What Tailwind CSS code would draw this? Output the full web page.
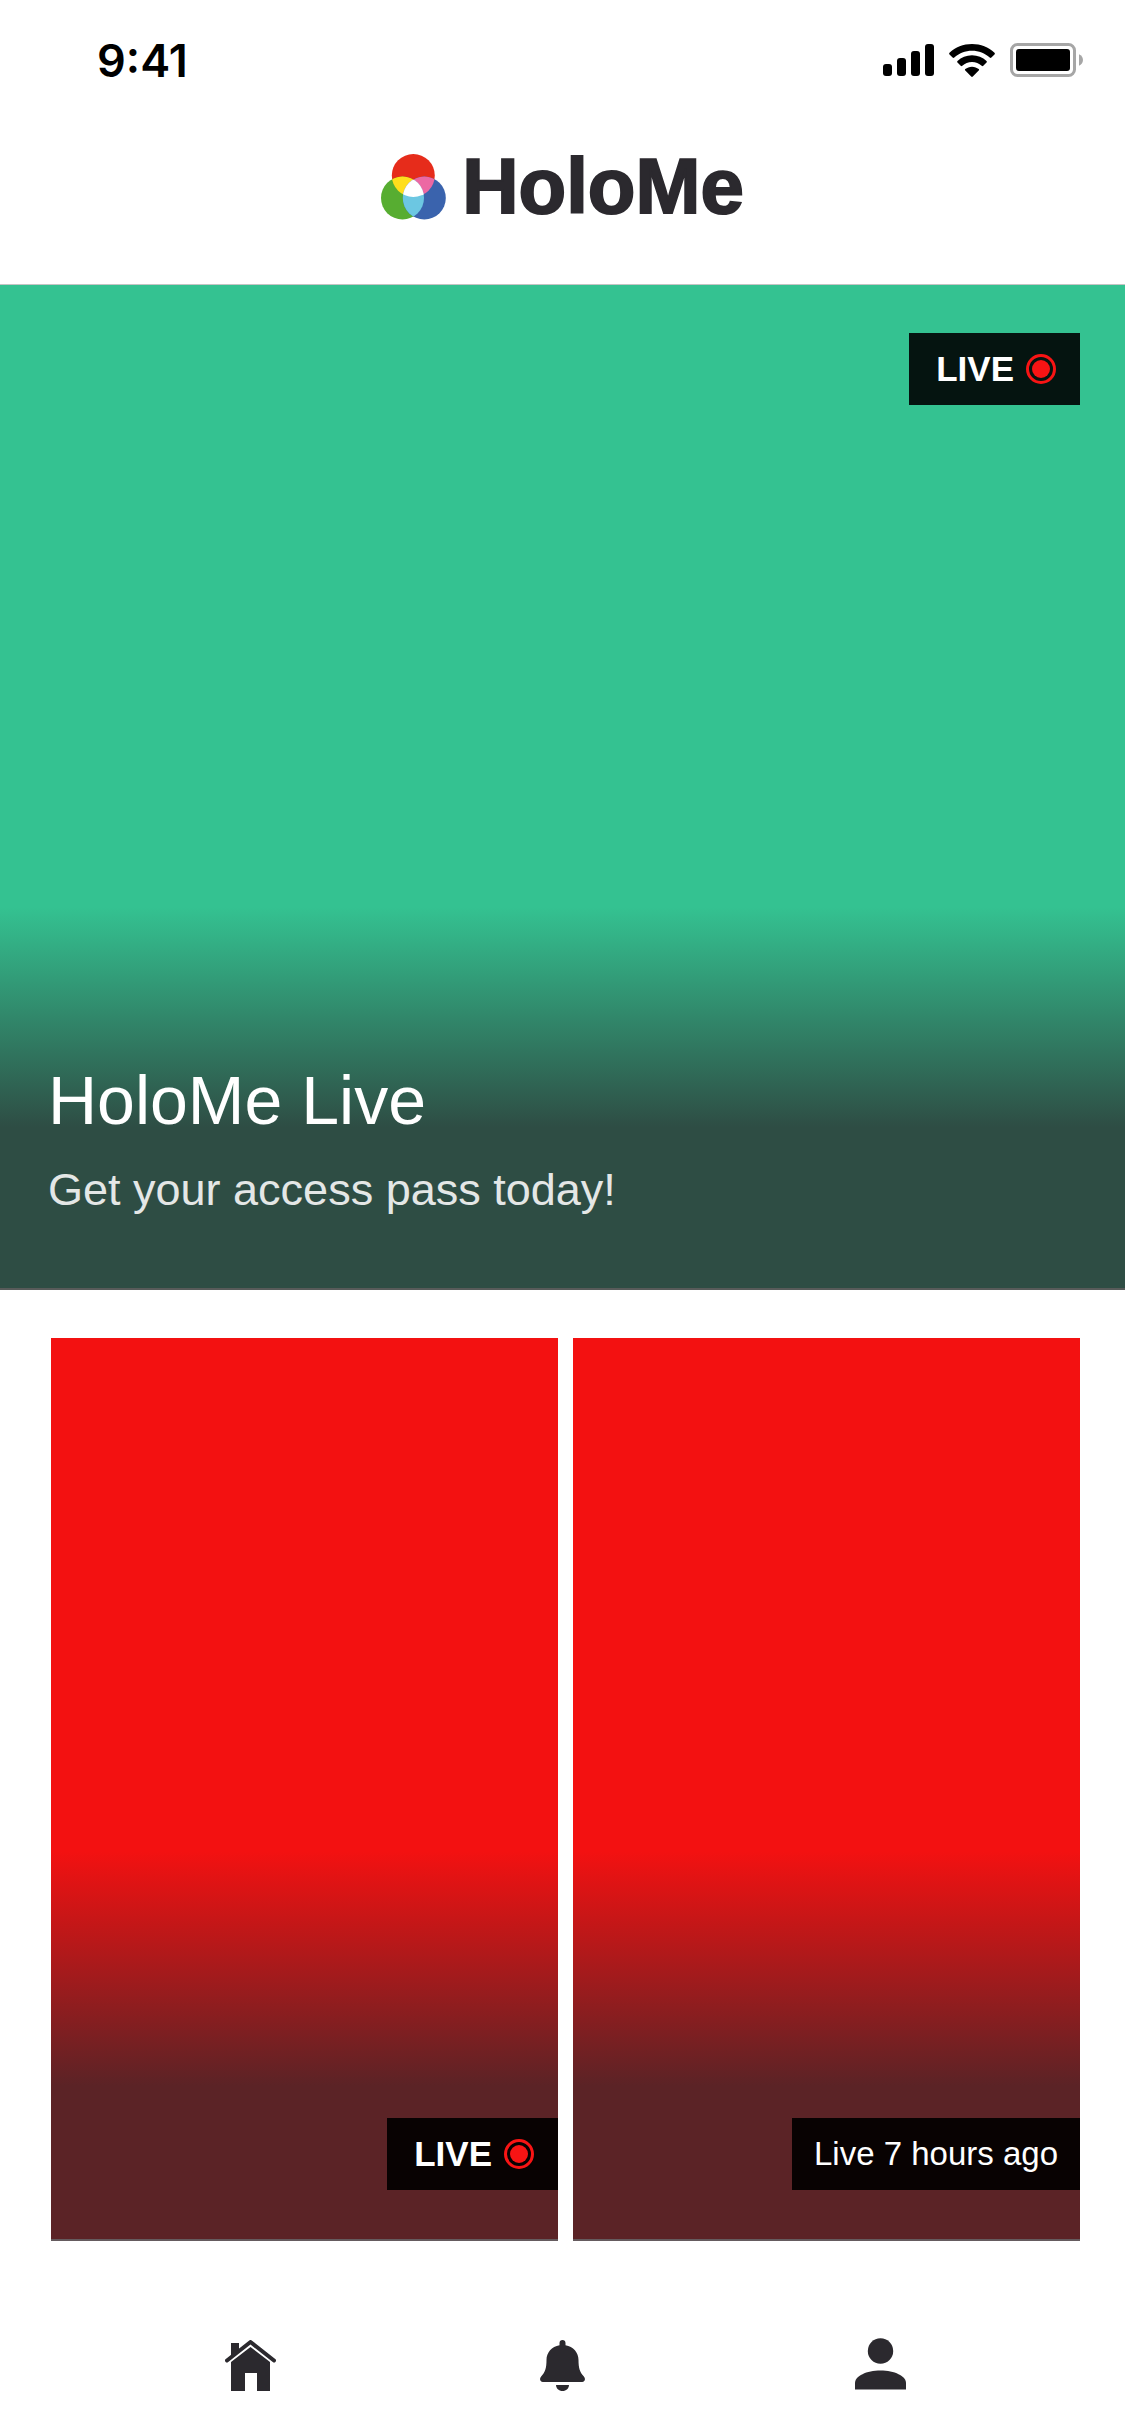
<!DOCTYPE html>
<html lang="en">
<head>
<meta charset="utf-8">
<meta name="viewport" content="width=device-width, initial-scale=1">
<title>HoloMe</title>
<script src="https://cdn.jsdelivr.net/npm/@tailwindcss/browser@4"></script>
</head>
<body class="flex min-h-screen flex-col bg-white font-['Liberation_Sans',Arial,sans-serif] text-[#2b292e]">

  <!-- Status bar -->
  <div class="flex h-30 items-center justify-between pr-[42px] pl-[97px] text-black">
    <time class="font-['Inter',sans-serif] text-[45px] leading-none font-semibold">9:41</time>
    <div class="flex items-center gap-[15px]">
      <svg class="h-8 w-[51px]" viewBox="0 0 51 32" fill="currentColor" role="img" aria-label="Signal">
        <rect x="0" y="20" width="9" height="12" rx="3"/>
        <rect x="14" y="14" width="9" height="18" rx="3"/>
        <rect x="28" y="7" width="9" height="25" rx="3"/>
        <rect x="42" y="0" width="9" height="32" rx="3"/>
      </svg>
      <svg class="h-[33px] w-[46px]" viewBox="0 0 46 33" fill="currentColor" role="img" aria-label="Wi-Fi">
        <path d="M23 0C14.300 0 6.400 3.300.5 8.700c-.5.500-.5 1.200 0 1.700l3.100 3.200c.5.500 1.200.5 1.700 0C10 9.300 16.200 6.700 23 6.700s13 2.600 17.700 6.900c.5.500 1.200.5 1.700 0l3.100-3.200c.5-.5.5-1.200 0-1.700C39.600 3.300 31.700 0 23 0z"/>
        <path d="M23 11.200c-5.600 0-10.700 2.200-14.500 5.700-.5.500-.5 1.200 0 1.700l3.200 3.200c.5.500 1.100.5 1.600 0 2.600-2.300 6-3.700 9.700-3.700s7.100 1.400 9.700 3.700c.5.500 1.100.5 1.600 0l3.200-3.200c.5-.5.5-1.200 0-1.700-3.800-3.500-8.900-5.700-14.500-5.700z"/>
        <path d="M23 22.700c-2.600 0-4.900.9-6.700 2.400-.5.400-.5 1.100 0 1.500l5.900 6c.5.500 1.100.5 1.600 0l5.900-6c.5-.4.5-1.100 0-1.500-1.800-1.500-4.100-2.400-6.700-2.400z"/>
      </svg>
      <svg class="h-[34px] w-[73px]" viewBox="0 0 73 34" role="img" aria-label="Battery">
        <rect x="1.500" y="1.500" width="63" height="31" rx="6" fill="none" stroke="#a6a6a6" stroke-width="3"/>
        <rect x="6" y="6" width="54" height="22" rx="3" fill="currentColor"/>
        <path d="M69 11.200c2.400 1 4 3.200 4 5.800s-1.600 4.800-4 5.800z" fill="#a6a6a6"/>
      </svg>
    </div>
  </div>

  <!-- Brand -->
  <header class="flex items-start justify-center gap-4 border-b border-[#c4c4c4] pt-[26px] pb-[58px]">
    <svg class="mt-2 h-[66px] w-[65px]" viewBox="0 0 65 66" aria-hidden="true">
      <defs>
        <clipPath id="left"><circle cx="21.500" cy="44" r="21.500"/></clipPath>
        <clipPath id="right"><circle cx="43.300" cy="44" r="21.500"/></clipPath>
      </defs>
      <circle cx="32.300" cy="21.500" r="21.500" fill="#e62c1b"/>
      <circle cx="21.500" cy="44" r="21.500" fill="#57ad31"/>
      <circle cx="43.300" cy="44" r="21.500" fill="#3a63ad"/>
      <circle cx="32.300" cy="21.500" r="21.500" fill="#ffde1c" clip-path="url(#left)"/>
      <circle cx="32.300" cy="21.500" r="21.500" fill="#ec68a3" clip-path="url(#right)"/>
      <g clip-path="url(#left)">
        <circle cx="43.300" cy="44" r="21.500" fill="#6cc7e2"/>
        <circle cx="32.300" cy="21.500" r="21.500" fill="#fff" clip-path="url(#right)"/>
      </g>
    </svg>
    <h1 class="text-[78px] leading-[80px] font-bold [-webkit-text-stroke:2px_#2b292e]">HoloMe</h1>
  </header>

  <main>
    <!-- Featured stream -->
    <a href="#live" class="flex aspect-[1125/1005] flex-col items-end justify-between border-b-2 border-[#585b5a] bg-[#34c291] bg-linear-to-b/srgb from-[#34c291] from-62% to-[#2e4d44] to-84% pt-12 text-white">
      <span class="mr-[45px] flex h-18 items-center gap-3 bg-[#051410] pr-6 pl-[27px] text-[35px] font-bold">LIVE
        <svg class="size-[30px]" viewBox="0 0 30 30" aria-hidden="true"><circle cx="15" cy="15" r="13.500" fill="none" stroke="#f81414" stroke-width="3"/><circle cx="15" cy="15" r="9" fill="#f81414"/></svg>
      </span>
      <span class="flex w-full flex-col gap-5 px-12 pb-[68px]">
        <span class="text-[68px] leading-[80px]">HoloMe Live</span>
        <span class="text-[45px] leading-[60px] text-[#e4e7e6]">Get your access pass today!</span>
      </span>
    </a>

    <!-- Streams -->
    <section class="grid grid-cols-2 gap-[15px] pt-12 pr-[45px] pl-[51px]" aria-label="Streams">
      <a href="#stream-1" class="flex aspect-[507/903] items-end justify-end border-b-2 border-[#655b5e] bg-[#f31111] bg-linear-to-b/srgb from-[#f31111] from-57% to-[#5b2326] to-83% pb-[49px] text-white">
        <span class="flex h-18 items-center gap-3 bg-[#080202] pr-6 pl-[27px] text-[35px] font-bold">LIVE
          <svg class="size-[30px]" viewBox="0 0 30 30" aria-hidden="true"><circle cx="15" cy="15" r="13.500" fill="none" stroke="#f81414" stroke-width="3"/><circle cx="15" cy="15" r="9" fill="#f81414"/></svg>
        </span>
      </a>
      <a href="#stream-2" class="flex aspect-[507/903] items-end justify-end border-b-2 border-[#655b5e] bg-[#f31111] bg-linear-to-b/srgb from-[#f31111] from-57% to-[#5b2326] to-83% pb-[49px] text-white">
        <span class="flex h-18 items-center bg-[#080202] px-[22px] text-[33px]">Live 7 hours ago</span>
      </a>
    </section>
  </main>

  <!-- Tab bar -->
  <nav class="mt-auto flex justify-between pt-12 pr-[219px] pb-[45px] pl-[225px]" aria-label="Main">
    <button type="button" aria-label="Home">
      <svg class="size-[51px]" viewBox="0 0 51 51" fill="currentColor">
        <path d="M6 3h8v6.500l-8 6.200z"/>
        <path d="M2 20.500 25.500 2 49 20.500" fill="none" stroke="currentColor" stroke-width="4" stroke-linecap="round" stroke-linejoin="round"/>
        <path d="M6 22 25.500 7 45 22v29H32V33H20v18H6z"/>
      </svg>
    </button>
    <button type="button" aria-label="Notifications">
      <svg class="size-[51px]" viewBox="0 0 51 51" fill="currentColor">
        <path d="M22.500 0c1.800 0 3 1.300 3 3v2.200C33.300 6.600 38.500 12.500 38.500 20c0 8 1.400 12.500 5.200 16.200 2.300 2.300 1.200 5.800-1.500 5.800H2.800C.1 42-1 38.500 1.300 36.200 5.100 32.500 6.500 28 6.500 20c0-7.500 5.200-13.400 13-14.800V3c0-1.700 1.200-3 3-3z"/>
        <path d="M16 45h13c0 3.400-2.900 6-6.500 6S16 48.400 16 45z"/>
      </svg>
    </button>
    <button type="button" aria-label="Profile">
      <svg class="size-[51px] overflow-visible" viewBox="0 0 51 51" fill="currentColor">
        <circle cx="25.500" cy="11" r="12.700"/>
        <path d="M0 49.500V43c0-7 11.500-12.500 25.500-12.500S51 36 51 43v6.500z"/>
      </svg>
    </button>
  </nav>
</body>
</html>
